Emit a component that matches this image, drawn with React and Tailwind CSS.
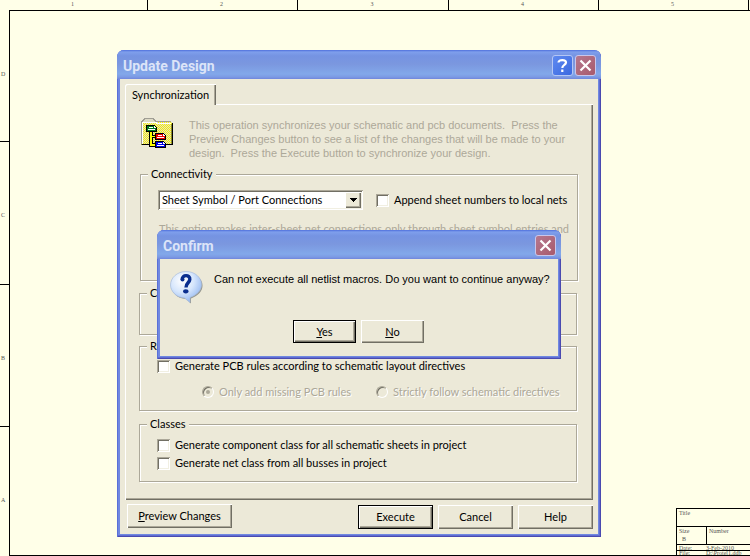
import React from "react";

const COLUMNS = ["1", "2", "3", "4", "5"];

function SheetBackground() {
  return (
    <div className="flex h-screen flex-col overflow-hidden bg-[#ffffe8] font-['Liberation_Serif',serif] text-[6px] leading-[8px] text-[#555]">
      <div className="grid h-[10px] shrink-0 grid-cols-[148px_150px_151px_150px_150px] overflow-hidden">
        {COLUMNS.map((c) => (
          <span key={c} className="border-r border-black pr-0.5 text-center">
            {c}
          </span>
        ))}
      </div>
      <div className="flex grow">
        <div className="grid w-[9px] shrink-0 grid-rows-[132px_143px_142px_1fr] text-center">
          <span className="flex items-center border-b border-black pb-1 pl-px">D</span>
          <span className="flex items-center border-b border-black pt-1 pl-px">C</span>
          <span className="flex items-center border-b border-black pt-1 pl-px">B</span>
          <span className="flex items-center pt-4 pl-px">A</span>
        </div>
        <div className="flex grow items-end justify-end border-t border-b border-l border-black">
          <div className="w-[74px] border-t border-l border-black">
            <div className="h-[17px] pl-0.5">Title</div>
            <div className="flex h-[19px] border-y border-black">
              <div className="w-[30px] border-r border-black pl-0.5">
                <div>Size</div>
                <div className="pl-[3px]">B</div>
              </div>
              <div className="pl-0.5">Number</div>
            </div>
            <div className="flex h-[6px] items-center overflow-hidden border-b border-black pl-0.5">
              <span className="w-[27px]">Date:</span>
              <span>3-Feb-2010</span>
            </div>
            <div className="flex h-1 items-center overflow-hidden pl-0.5">
              <span className="w-[27px]">File:</span>
              <span>D:\Protel1.ddb</span>
            </div>
          </div>
        </div>
      </div>
    </div>
  );
}

function TitleBar({ title, help }) {
  return (
    <div className="flex h-[29px] items-center gap-[2px] bg-[linear-gradient(to_bottom,#4f70dc_0px,#7f9fec_2px,#7593e2_6px,#7b97df_14px,#82a8ea_24px,#7c9ae4_27px,#6f86dc_29px)] pr-[5px] pl-[6px]">
      <h2 className="grow pt-[3px] font-[Roboto,sans-serif] text-[14px] leading-[16px] font-bold text-[#dce4f8]">
        {title}
      </h2>
      {help && (
        <button
          aria-label="Help"
          className="mt-px flex size-[21px] items-center justify-center rounded-[3px] border border-[#b4c6f5] bg-linear-to-br from-[#5f8af0] to-[#3b68e0]"
        >
          <svg width="13" height="15" viewBox="0 0 13 15" fill="none" stroke="white" strokeWidth="2.2">
            <path d="M2.5 4.5C2.5 1.2 10 1.2 10 4.6C10 7 6.3 6.8 6.3 10" />
            <path d="M6.3 11.6V14" />
          </svg>
        </button>
      )}
      <button
        aria-label="Close"
        className="mt-px flex size-[21px] items-center justify-center rounded-[3px] border border-[#c9c6ea] bg-linear-to-br from-[#b5788f] to-[#a85a6c]"
      >
        <svg width="13" height="13" viewBox="0 0 13 13" stroke="white" strokeWidth="2.2">
          <path d="M1.5 1.5L11.5 11.5M11.5 1.5L1.5 11.5" />
        </svg>
      </button>
    </div>
  );
}

function PushButton({ children, isDefault, className }) {
  return (
    <button
      className={`flex items-center justify-center bg-[#ece9d8] ${
        isDefault
          ? "border border-black shadow-[inset_1px_1px_0_white,inset_-1px_-1px_0_#716f64,inset_-2px_-2px_0_#aca899]"
          : "shadow-[inset_1px_1px_0_white,inset_-1px_-1px_0_#716f64,inset_-2px_-2px_0_#aca899]"
      } ${className}`}
    >
      {children}
    </button>
  );
}

function CheckBox({ label, className = "" }) {
  return (
    <label className={`flex items-center gap-[5px] ${className}`}>
      <input
        type="checkbox"
        className="size-[13px] shrink-0 appearance-none bg-white shadow-[inset_1px_1px_0_#aca899,inset_-1px_-1px_0_white,inset_2px_2px_0_#716f64,inset_-2px_-2px_0_#f1efe2]"
      />
      <span>{label}</span>
    </label>
  );
}

function Radio({ label, checked, className = "" }) {
  return (
    <label className={`flex items-center gap-[5px] text-[#aca899] [text-shadow:1px_1px_0_white] ${className}`}>
      <span className="grid size-3 shrink-0 place-items-center">
        <input
          type="radio"
          name="rules"
          disabled
          defaultChecked={checked}
          className="peer col-start-1 row-start-1 size-3 appearance-none rounded-full border border-t-[#aca899] border-r-white border-b-white border-l-[#aca899] shadow-[inset_1px_1px_0_#716f64]"
        />
        <span className="col-start-1 row-start-1 hidden size-1 rounded-full bg-[#aca899] peer-checked:block" />
      </span>
      <span>{label}</span>
    </label>
  );
}

function Group({ legend, className, children }) {
  return (
    <fieldset
      className={`border border-[#aca899] shadow-[1px_1px_0_white,inset_1px_1px_0_white] ${className}`}
    >
      <legend className="ml-[7px] bg-[#ece9d8] px-[3px] leading-[14px]">{legend}</legend>
      {children}
    </fieldset>
  );
}

function SyncIcon() {
  return (
    <svg className="shrink-0" width="33" height="31" viewBox="0 0 33 31" shapeRendering="crispEdges">
      <defs>
        <pattern id="dither" width="2" height="2" patternUnits="userSpaceOnUse">
          <rect width="2" height="2" fill="#fbf400" />
          <rect width="1" height="1" fill="#dedbd0" />
          <rect x="1" y="1" width="1" height="1" fill="#dedbd0" />
        </pattern>
      </defs>
      <path d="M1 4H31V27H1Z" fill="url(#dither)" />
      <path d="M2 4L4 1H13L16 4Z" fill="#dedbc6" />
      <path d="M0.5 26V3.500H1.500V2.500H2.500V1.500H3.500V0.500H12.500V1.500H13.500V2.500H14.500V3.500H30" fill="none" stroke="#a09e94" />
      <path d="M1.500 26V4.500H15.500V5.500H30" fill="none" stroke="#ffffff" />
      <path d="M30 6H31V26H1V27H0V26H30Z" fill="#8a8a30" />
      <path d="M31 5H32V27H1V26H31Z" fill="#000000" />
      <path d="M8 13H12V17H15V20H12V25H15V29H8Z" fill="#000" />
      <path d="M9 13H11V18H15V19H11V26H15V28H9Z" fill="#ffff00" />
      <path d="M5 7H14V8H15V9H16V14H5Z" fill="#000" />
      <path d="M6 8H13V10H15V13H6Z" fill="#007a1c" />
      <path d="M8 9H12V10H8ZM7 11H14V12H7ZM13 8H14V9H15V10H13Z" fill="#fff" />
      <path d="M14 15H23V16H24V17H25V22H14Z" fill="#000" />
      <path d="M15 16H22V18H24V21H15Z" fill="#f00000" />
      <path d="M17 17H21V18H17ZM16 19H23V20H16ZM22 16H23V17H24V18H22Z" fill="#fff" />
      <path d="M14 23H23V24H24V25H25V30H14Z" fill="#000" />
      <path d="M15 24H22V26H24V29H15Z" fill="#0000e8" />
      <path d="M17 25H21V26H17ZM16 27H23V28H16ZM22 24H23V25H24V26H22Z" fill="#fff" />
    </svg>
  );
}

function QuestionIcon() {
  return (
    <svg className="shrink-0" width="34" height="34" viewBox="0 0 34 34">
      <defs>
        <radialGradient id="bubble" cx="0.38" cy="0.3" r="0.75">
          <stop offset="0" stopColor="#ffffff" />
          <stop offset="0.5" stopColor="#d6e6fc" />
          <stop offset="1" stopColor="#8fb4f0" />
        </radialGradient>
      </defs>
      <path d="M17 2C26 2 32.500 8 32.500 14.500C32.500 20 28.500 24.500 21 27.500V32.500L16 28C7 27.500 1.500 21.500 1.500 15C1.500 8 8 2 17 2Z" fill="#85857c" opacity="0.85" />
      <path d="M16 0.500C25 0.500 31.500 6.500 31.500 13.500C31.500 19.500 27 24 20 26.500V31.500L14.500 27C6.500 26.500 0.500 20.500 0.500 14C0.500 7 7 0.500 16 0.500Z" fill="url(#bubble)" stroke="#a9bddd" strokeWidth="0.7" />
      <path d="M12.300 8.500C11.500 3.500 20.500 3.300 19.800 8.500C19.500 12 16 11.800 16 16.500" fill="none" stroke="#0b2f8f" strokeWidth="3.4" />
      <circle cx="12.500" cy="8.500" r="2" fill="#0b2f8f" />
      <ellipse cx="15.800" cy="20.300" rx="2.700" ry="2.100" fill="#0b2f8f" />
    </svg>
  );
}

function UpdateDesign() {
  return (
    <section
      aria-label="Update Design"
      className="absolute top-[50px] left-[117px] h-[487px] w-[484px] overflow-hidden rounded-t-[7px] bg-[#7088e0] shadow-[inset_1px_0_0_#5a70d8,inset_-1px_-1px_0_#4a4ab0,inset_-2px_-2px_0_#5f6cd2]"
    >
      <TitleBar title="Update Design" help />
      <div className="mx-[3px] h-[455px] bg-[#ece9d8] px-[5px] pt-[5px]">
        <div role="tablist" className="flex">
          <button
            role="tab"
            aria-selected="true"
            className="relative z-10 -mb-px h-[21px] w-[91px] rounded-tl-[2px] bg-[#ece9d8] shadow-[inset_1px_1px_0_white,inset_-1px_0_0_#716f64,inset_-2px_0_0_#aca899]"
          >
            Synchronization
          </button>
        </div>
        <div
          role="tabpanel"
          className="h-[396px] px-[14px] pt-[14px] shadow-[inset_1px_1px_0_white,inset_-1px_-1px_0_#716f64,inset_-2px_-2px_0_#aca899]"
        >
          <div className="flex gap-[15px] pl-[2px]">
            <SyncIcon />
            <p className="font-['Liberation_Sans',Arial,sans-serif] text-[11px] leading-[14px] whitespace-pre text-[#aca899]">
              {"This operation synchronizes your schematic and pcb documents.  Press the\nPreview Changes button to see a list of the changes that will be made to your\ndesign.  Press the Execute button to synchronize your design."}
            </p>
          </div>
          <Group legend="Connectivity" className="mt-[7px] mr-px ml-px h-[114px]">
            <div className="flex items-center pt-[9px] pl-[17px]">
              <div className="grid">
                <select
                  aria-label="Connectivity"
                  className="col-start-1 row-start-1 h-[20px] w-[205px] appearance-none bg-white pl-1 shadow-[inset_1px_1px_0_#aca899,inset_-1px_-1px_0_white,inset_2px_2px_0_#716f64,inset_-2px_-2px_0_#f1efe2]"
                >
                  <option>Sheet Symbol / Port Connections</option>
                </select>
                <span className="pointer-events-none col-start-1 row-start-1 mr-[2px] flex h-4 w-4 items-center justify-center self-center justify-self-end bg-[#ece9d8] shadow-[inset_1px_1px_0_white,inset_-1px_-1px_0_#716f64,inset_-2px_-2px_0_#aca899]">
                  <svg width="7" height="4" viewBox="0 0 7 4" shapeRendering="crispEdges">
                    <path d="M0 0H7L3.500 4Z" />
                  </svg>
                </span>
              </div>
              <CheckBox label="Append sheet numbers to local nets" className="ml-[13px]" />
            </div>
            <p className="pt-[12px] pl-[18px] leading-[14px] whitespace-nowrap text-[#aca899]">
              This option makes inter-sheet net connections only through sheet symbol entries and
            </p>
          </Group>
          <Group legend="Connectivity" className="mt-[5px] mr-[2px] h-[49px]" />
          <Group legend="Rules" className="mt-[4px] mr-[2px] h-[72px]">
            <CheckBox label="Generate PCB rules according to schematic layout directives" className="mt-[6px] ml-[17px] h-[14px]" />
            <div className="mt-[12px] flex h-[14px] items-center">
              <Radio label="Only add missing PCB rules" checked className="ml-[62px] w-[174px]" />
              <Radio label="Strictly follow schematic directives" />
            </div>
          </Group>
          <Group legend="Classes" className="mt-[6px] mr-[2px] h-[65px]">
            <CheckBox label="Generate component class for all schematic sheets in project" className="mt-[7px] ml-[17px] h-[14px]" />
            <CheckBox label="Generate net class from all busses in project" className="mt-[4px] ml-[17px] h-[14px]" />
          </Group>
        </div>
        <div className="flex gap-[5px] pt-[5px] pl-[2px]">
          <PushButton className="-mt-px mr-auto h-[24px] w-[105px]">
            <span><u>P</u>review Changes</span>
          </PushButton>
          <PushButton isDefault className="h-[24px] w-[75px]">Execute</PushButton>
          <PushButton className="h-[24px] w-[75px]">Cancel</PushButton>
          <PushButton className="h-[24px] w-[75px]">Help</PushButton>
        </div>
      </div>
    </section>
  );
}

function ConfirmDialog() {
  return (
    <section
      role="dialog"
      aria-label="Confirm"
      className="absolute top-[230px] left-[157px] h-[129px] w-[404px] overflow-hidden rounded-t-[7px] bg-[#7088e0] shadow-[inset_1px_0_0_#5a70d8,inset_-1px_-1px_0_#4a4ab0,inset_-2px_-2px_0_#5f6cd2]"
    >
      <TitleBar title="Confirm" />
      <div className="mx-[3px] h-[97px] bg-[#ece9d8] pt-[12px]">
        <div className="flex gap-[10px] pl-[10px]">
          <QuestionIcon />
          <p className="pt-px font-['Liberation_Sans',Arial,sans-serif] text-[11px] leading-[14px] whitespace-nowrap">
            Can not execute all netlist macros. Do you want to continue anyway?
          </p>
        </div>
        <div className="mt-[15px] flex gap-[5px] pl-[133px]">
          <PushButton isDefault className="h-[23px] w-[63px]">
            <span><u>Y</u>es</span>
          </PushButton>
          <PushButton className="h-[23px] w-[63px]">
            <span><u>N</u>o</span>
          </PushButton>
        </div>
      </div>
    </section>
  );
}

export default function App() {
  return (
    <main className="relative h-screen overflow-hidden font-[Lato,'Liberation_Sans',sans-serif] text-[11px] leading-[14px] text-black">
      <SheetBackground />
      <UpdateDesign />
      <ConfirmDialog />
    </main>
  );
}
